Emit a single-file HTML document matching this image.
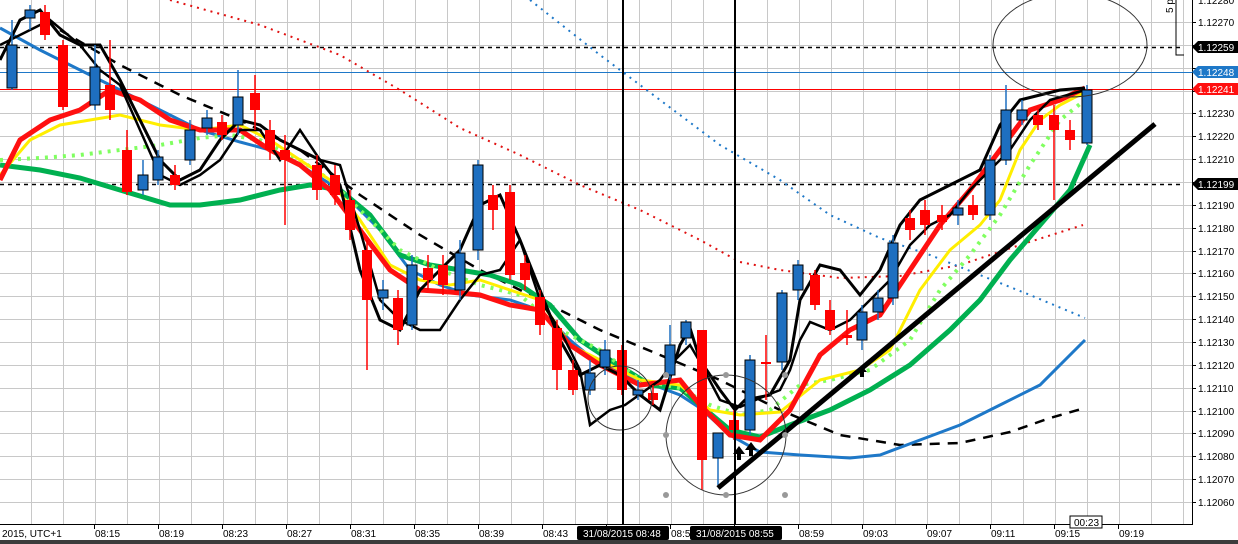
<!DOCTYPE html>
<html><head><meta charset="utf-8"><style>
html,body{margin:0;padding:0;background:#fff;width:1238px;height:544px;overflow:hidden}
svg{display:block}
text{font-family:"Liberation Sans",sans-serif;font-size:10px}
</style></head><body>
<svg id="s" width="1238" height="544" xmlns="http://www.w3.org/2000/svg">
<rect width="1238" height="544" fill="#fff"/>
<g id="grid" stroke="#c8c8c8" stroke-width="1"></g>
<line x1="0" y1="47.5" x2="1183" y2="47.5" stroke="#000" stroke-dasharray="4,4" stroke-width="1.5"/>
<line x1="0" y1="184.5" x2="1183" y2="184.5" stroke="#000" stroke-dasharray="4,4" stroke-width="1.5"/>
<line x1="0" y1="72.5" x2="1192" y2="72.5" stroke="#1e78c8" stroke-width="1"/>
<line x1="0" y1="89.5" x2="1192" y2="89.5" stroke="#ff0000" stroke-width="1"/>
<polyline fill="none" stroke="#e01010" stroke-width="2" stroke-dasharray="2,5" points="170,0 260,25 340,55 400,90 460,128 520,155 580,185 640,210 700,240 740,262 780,270 840,278 900,276 960,265 1020,245 1083,225"/>
<polyline fill="none" stroke="#1e78c8" stroke-width="2" stroke-dasharray="2,5" points="530,0 600,55 660,100 720,145 780,180 830,215 880,238 930,255 980,275 1030,295 1085,318"/>
<polyline fill="none" stroke="#000" stroke-width="2.5" stroke-dasharray="10,8" points="60,30 120,65 180,95 240,120 300,150 360,195 420,235 480,270 540,300 600,330 660,355 720,380 780,410 840,435 900,445 960,443 1010,432 1050,418 1085,408"/>
<polyline fill="none" stroke="#1e78c8" stroke-width="3" points="0,28 40,50 80,70 120,90 160,110 200,130 240,142 270,150 300,165 340,190 380,230 410,270 440,285 470,295 510,300 540,310 570,340 600,365 640,380 680,395 700,408 730,435 760,452 800,455 850,458 880,455 920,440 960,425 1000,405 1040,385 1085,340"/>
<polyline fill="none" stroke="#00b050" stroke-width="5" points="0,165 40,170 80,178 120,190 170,205 200,205 240,200 280,190 310,185 340,190 370,215 400,255 430,265 460,270 490,275 520,285 550,305 580,340 610,360 650,385 680,388 700,405 730,430 760,437 790,425 830,410 870,390 910,365 950,330 980,300 1010,260 1040,225 1070,190 1090,145"/>
<polyline fill="none" stroke="#80ff60" stroke-width="4" stroke-dasharray="3,6" points="0,160 40,158 80,155 120,150 160,145 200,138 230,135 260,140 300,160 330,180 360,210 400,250 440,270 480,285 520,295 560,330 600,350 640,380 680,388 710,405 740,415 770,410 800,385 830,380 870,370 910,340 940,290 970,255 1000,215 1030,165 1060,120 1085,100"/>
<polyline fill="none" stroke="#ffee00" stroke-width="3" points="0,175 30,140 60,125 90,120 120,115 160,125 200,130 240,125 270,140 300,160 330,180 360,220 390,265 420,280 450,285 480,280 510,290 540,300 570,345 600,360 640,380 680,385 710,410 740,415 780,412 820,380 860,370 890,350 920,290 950,250 980,225 1000,200 1020,150 1040,120 1060,105 1085,92"/>
<polyline fill="none" stroke="#ff1010" stroke-width="5" points="0,180 20,140 50,120 80,110 110,90 140,100 170,120 200,130 240,130 270,150 300,165 330,190 360,230 390,270 420,290 450,292 480,295 510,305 540,310 570,345 600,365 640,385 680,380 700,405 730,435 760,440 790,410 820,355 850,330 880,315 910,270 940,225 970,190 1000,150 1030,110 1060,100 1085,88"/>
<polyline fill="none" stroke="#000" stroke-width="3" points="0,60 20,20 40,10 60,35 80,45 100,45 120,80 140,120 160,160 180,180 200,170 220,140 240,120 260,125 280,140 300,150 320,160 340,185 360,270 380,320 400,330 420,290 440,270 460,250 480,205 500,195 520,240 540,290 560,340 580,375 600,365 620,375 640,395 660,410 680,345 690,328 700,360 720,390 735,410 745,400 770,395 790,360 800,300 820,265 840,270 860,295 880,270 900,225 920,200 940,190 960,180 980,170 1000,125 1020,100 1040,95 1060,90 1085,88"/>
<polyline fill="none" stroke="#000" stroke-width="2.5" points="0,45 20,35 50,20 80,45 100,70 120,85 140,130 160,175 180,185 200,175 220,160 240,130 260,130 280,160 300,130 320,160 340,165 360,230 380,300 400,320 420,330 440,330 460,300 480,275 500,270 520,240 540,300 560,330 580,370 590,425 610,410 625,405 660,380 675,360 690,345 700,362 720,400 740,407 760,398 780,390 790,370 800,340 810,322 830,330 850,320 870,300 890,280 910,245 930,225 950,215 970,190 990,170 1010,150 1030,120 1050,100 1085,90"/>
<g id="candles"></g>
<line x1="718" y1="488" x2="1155" y2="124" stroke="#000" stroke-width="5"/>
<circle cx="620" cy="398" r="32" fill="none" stroke="#333" stroke-width="1"/>
<circle cx="726" cy="435" r="60" fill="none" stroke="#333" stroke-width="1"/>
<circle cx="666" cy="375" r="3" fill="#999"/><circle cx="726" cy="375" r="3" fill="#999"/><circle cx="785" cy="375" r="3" fill="#999"/>
<circle cx="666" cy="435" r="3" fill="#999"/><circle cx="785" cy="435" r="3" fill="#999"/>
<circle cx="666" cy="495" r="3" fill="#999"/><circle cx="726" cy="495" r="3" fill="#999"/><circle cx="785" cy="495" r="3" fill="#999"/>
<ellipse cx="1070" cy="45" rx="77" ry="52" fill="none" stroke="#333" stroke-width="1"/>
<path d="M733,454 L739,446 L745,454 Z M737,454h4v6h-4z" fill="#000"/>
<path d="M745,450 L751,442 L757,450 Z M749,450h4v6h-4z" fill="#000"/>
<path d="M857,372 L862,366 L867,372 Z M860,372h4v5h-4z" fill="#000"/>
<line x1="623" y1="0" x2="623" y2="524" stroke="#000" stroke-width="2"/>
<line x1="735" y1="0" x2="735" y2="524" stroke="#000" stroke-width="2"/>
<line x1="1192.5" y1="0" x2="1192.5" y2="524" stroke="#000"/>
<line x1="0" y1="524.5" x2="1193" y2="524.5" stroke="#000"/>
<path d="M1176,0 V55 H1184" fill="none" stroke="#000"/>
<text x="1172" y="8" transform="rotate(-90 1175 10)" font-size="9">5 p</text>
<g id="yax" fill="#000"></g>
<path d="M1192,47 L1198,41 H1238 V53 H1198 Z" fill="#000"/><text x="1198" y="51" fill="#fff">1.12259</text>
<path d="M1192,72 L1198,66 H1238 V78 H1198 Z" fill="#1e78c8"/><text x="1198" y="76" fill="#fff">1.12248</text>
<path d="M1192,89 L1198,83 H1238 V95 H1198 Z" fill="#ff1010"/><text x="1198" y="93" fill="#fff">1.12241</text>
<path d="M1192,184 L1198,178 H1238 V190 H1198 Z" fill="#000"/><text x="1198" y="188" fill="#fff">1.12199</text>
<g id="xax"></g>
<text x="2" y="537">2015, UTC+1</text>
<rect x="577" y="526" width="92" height="14" rx="2" fill="#000"/><text x="583" y="537" fill="#fff">31/08/2015 08:48</text>
<rect x="690" y="526" width="92" height="14" rx="2" fill="#000"/><text x="696" y="537" fill="#fff">31/08/2015 08:55</text>
<rect x="1070" y="516" width="32" height="12" fill="#fff" stroke="#000"/><text x="1074" y="526" font-size="9">00:23</text>
<rect x="0" y="540" width="1238" height="4" fill="#3c3c3c"/>
</svg>
<script>
var NS="http://www.w3.org/2000/svg";
function el(p,t,a,txt){var e=document.createElementNS(NS,t);for(var k in a)e.setAttribute(k,a[k]);if(txt)e.textContent=txt;var par=document.getElementById(p);if(t=="line"&&p=="xax"){par.insertBefore(e,par.firstChild);}else par.appendChild(e);}
for(var x=31;x<1192;x+=32)el("grid","line",{x1:x+.5,y1:0,x2:x+.5,y2:524});
var p=["1.12270","1.12260","1.12250","1.12240","1.12230","1.12220","1.12210","1.12200","1.12190","1.12180","1.12170","1.12160","1.12150","1.12140","1.12130","1.12120","1.12110","1.12100","1.12090","1.12080","1.12070","1.12060"];
for(var i=0;i<22;i++){var y=Math.round(22+i*22.86);el("grid","line",{x1:0,y1:y+.5,x2:1192,y2:y+.5});
 if(i!=1&&i!=2&&i!=3&&i!=7)el("yax","text",{x:1198,y:y+4},p[i]);el("yax","line",{x1:1192,y1:y+.5,x2:1196,y2:y+.5,stroke:"#000"});}
el("yax","text",{x:1198,y:4},"1.12280");
var t=["08:15","08:19","08:23","08:27","08:31","08:35","08:39","08:43","","08:5","","08:59","09:03","09:07","09:11","09:15","09:19"];
for(var i=0;i<t.length;i++){var x=94+i*64;el("xax","line",{x1:x+.5,y1:524,x2:x+.5,y2:529,stroke:"#000"});if(t[i])el("xax","text",{x:x+1,y:537},t[i]);}
var C=[[12,45,88,20,90,'b'],[30,10,18,5,30,'b'],[45,12,35,5,40,'r'],[63,45,107,40,110,'r'],[95,67,105,45,110,'b'],[110,85,110,40,120,'r'],[127,150,192,130,195,'r'],[143,175,190,160,195,'b'],[158,157,180,150,185,'b'],[175,175,185,165,190,'r'],[190,130,160,120,165,'b'],[207,118,128,110,135,'b'],[222,122,135,115,140,'r'],[238,97,125,70,135,'b'],[255,93,110,75,130,'r'],[270,130,150,120,160,'r'],[285,150,160,135,225,'r'],[317,165,190,155,200,'r'],[335,175,195,165,205,'r'],[350,200,230,190,240,'r'],[367,250,300,240,370,'r'],[383,290,298,280,310,'b'],[398,298,330,290,345,'r'],[412,265,325,255,330,'b'],[428,268,280,255,290,'r'],[443,265,285,255,295,'r'],[460,253,290,240,300,'b'],[478,165,250,160,260,'b'],[493,195,210,185,230,'r'],[510,192,275,185,280,'r'],[525,263,280,255,290,'r'],[540,297,325,290,335,'r'],[557,328,370,320,390,'r'],[573,370,390,360,395,'r'],[590,373,390,360,395,'b'],[605,350,367,340,375,'b'],[622,350,390,345,395,'r'],[638,390,395,380,400,'b'],[653,393,400,385,405,'r'],[670,345,375,325,380,'b'],[686,322,338,320,345,'b'],[702,330,460,330,490,'r'],[718,433,458,433,485,'b'],[734,420,430,410,440,'r'],[750,360,430,355,435,'b'],[766,362,364,335,400,'r'],[782,293,362,290,370,'b'],[798,265,290,260,300,'b'],[815,275,305,270,310,'r'],[830,310,330,300,335,'r'],[847,335,338,310,345,'r'],[862,312,340,305,350,'b'],[878,298,312,290,320,'b'],[893,243,298,235,305,'b'],[910,218,230,210,240,'r'],[925,210,225,200,235,'r'],[942,215,222,205,230,'r'],[958,208,215,200,225,'b'],[973,205,215,195,220,'r'],[990,160,215,155,220,'b'],[1006,110,160,85,165,'b'],[1022,110,120,100,125,'b'],[1038,115,125,110,130,'r'],[1054,115,130,105,200,'r'],[1070,130,140,120,150,'r'],[1087,90,143,85,145,'b']];
C.forEach(function(c){var col=c[5]=='b'?'#1e6fc0':'#ff0000';
 el("candles","line",{x1:c[0],y1:c[3],x2:c[0],y2:c[4],stroke:col,"stroke-width":1.5});
 el("candles","rect",{x:c[0]-5,y:c[1],width:10,height:Math.max(2,c[2]-c[1]),fill:col,stroke:c[5]=='b'?'#000':'none'});});
</script>
</body></html>
